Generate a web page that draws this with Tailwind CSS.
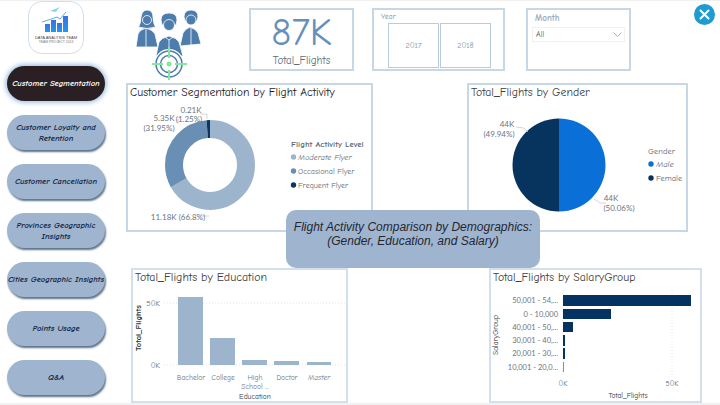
<!DOCTYPE html>
<html lang="en">

<head>
  <meta charset="UTF-8">
  <title>Customer Segmentation</title>
  <script src="https://cdn.jsdelivr.net/npm/@tailwindcss/browser@4"></script>
</head>

<body class="relative w-[720px] h-[405px] overflow-hidden bg-white border-t border-b-2 border-[#f0f0f0] font-['Comic_Sans_MS','Comic_Neue',cursive]">
  <div class="flex h-full">

    <!-- Sidebar -->
    <aside class="w-[126px] shrink-0 pl-[7px]">
      <div class="ml-[21px] w-[56px] h-[53px] rounded-[14px] border border-[#cfdfee] bg-white">
        <svg width="54" height="51" viewBox="29 2 54 51">
          <defs>
            <linearGradient id="logoBar" x1="0" y1="0" x2="0" y2="1">
              <stop offset="0" stop-color="#3f6fe0" />
              <stop offset="1" stop-color="#1d9bf0" />
            </linearGradient>
          </defs>
          <rect x="45" y="24" width="5" height="8" fill="url(#logoBar)" />
          <rect x="51" y="20" width="5" height="12" fill="url(#logoBar)" />
          <rect x="57" y="23" width="5" height="9" fill="url(#logoBar)" />
          <rect x="63" y="16" width="5" height="16" fill="url(#logoBar)" />
          <path d="M42 22Q52 19 57 17L60 19L66 12" fill="none" stroke="#5aa9ee" stroke-width="1" />
          <path d="M50 11L60 7L62 5L58 9L56 12Z" fill="#8fd0f5" />
          <text x="56" y="38.500" text-anchor="middle" font-size="4" font-family="Liberation Sans" fill="#444">DATA ANALYSIS TEAM</text>
          <text x="56" y="43" text-anchor="middle" font-size="3.400" font-family="Liberation Sans" fill="#777">TEAM PROJECT 2024</text>
        </svg>
      </div>

      <nav class="mt-[12px] flex flex-col gap-[14px] w-[98px] text-[8.5px] font-bold italic leading-[11px] text-center text-[#12233f]">
        <a class="h-[35px] flex items-center justify-center rounded-[18px] bg-[#2a2024] text-white shadow-[0_0_4px_2px_#a9c6e4]">Customer Segmentation</a>
        <a class="h-[35px] flex items-center justify-center px-2 rounded-[18px] bg-[#9fb5cf] shadow-[1px_2px_2px_#5d7389]">Customer Loyalty and Retention</a>
        <a class="h-[35px] flex items-center justify-center px-2 rounded-[18px] bg-[#9fb5cf] shadow-[1px_2px_2px_#5d7389]">Customer Cancellation</a>
        <a class="h-[35px] flex items-center justify-center px-2 rounded-[18px] bg-[#9fb5cf] shadow-[1px_2px_2px_#5d7389]">Provinces Geographic Insights</a>
        <a class="h-[35px] flex items-center justify-center rounded-[18px] bg-[#9fb5cf] shadow-[1px_2px_2px_#5d7389]">Cities Geographic Insights</a>
        <a class="h-[35px] flex items-center justify-center px-2 rounded-[18px] bg-[#9fb5cf] shadow-[1px_2px_2px_#5d7389]">Points Usage</a>
        <a class="h-[35px] flex items-center justify-center px-2 rounded-[18px] bg-[#9fb5cf] shadow-[1px_2px_2px_#5d7389]">Q&amp;A</a>
      </nav>
    </aside>

    <!-- Report page -->
    <main class="flex-1 flex flex-col">

      <!-- Header row -->
      <div class="h-[82px] pt-[7px] flex items-start">
        <svg class="ml-[9px] mt-[2px]" width="68" height="70" viewBox="135 10 68 70">
          <g fill="#4c7dad" stroke="#fff" stroke-width=".8">
            <!-- left woman -->
            <path d="M136 47L138 34Q139 30 146 28Q153 30 155 34L158 47Z" />
            <path d="M138.500 27Q141 23 141 17Q142 10 147 10Q153 10 153 17Q153 23 155.500 27Q147 30 138.500 27Z" />
            <circle cx="147" cy="20" r="4.500" />
            <!-- right man -->
            <path d="M180 46L183 33Q185 29 190 27Q196 29 198 33L201 44Z" />
            <path d="M184 17Q184 10 191 10Q198 10 198 17L197 21H185Z" />
            <circle cx="191" cy="20" r="5" />
            <!-- middle person -->
            <path d="M156 56L159 42Q161 38 169 36Q177 38 179 42L183 56Z" />
            <path d="M161 20Q161 13 169 13Q177 13 177 20L176 25H162Z" />
            <circle cx="169" cy="25" r="5.500" />
          </g>
          <path d="M146 29V47M191 28V45M165 37L169 40L173 37M169 40V52" fill="none" stroke="#fff" stroke-width=".8" />
          <circle cx="169" cy="64" r="15" fill="#fff" />
          <g fill="none" stroke="#4c7dad" stroke-width="1.500">
            <circle cx="169" cy="64" r="13" />
            <circle cx="169" cy="64" r="8.500" />
          </g>
          <path d="M169 47V58M169 70V80M152 64H163M175 64H187" stroke="#84e89c" stroke-width="2" />
          <circle cx="169" cy="64" r="2.500" fill="#84e89c" />
        </svg>

        <div class="ml-[46px] w-[105px] h-[63px] border-2 border-[#c8d7e6] flex flex-col items-center">
          <div class="mt-[2px] text-[39px] leading-[42px] text-[#6690bb]">87K</div>
          <div class="text-[11px] leading-[13px] text-[#5b6b7b]">Total_Flights</div>
        </div>

        <div class="ml-[18px] w-[133px] h-[63px] border-2 border-[#c8d7e6] pl-[14px] pt-[2px]">
          <div class="text-[7.5px] leading-[10px] -ml-[7px] text-[#7c8ea0]">Year</div>
          <div class="mt-[1px] flex gap-px text-[8px] text-[#7c93ad]">
            <div class="w-[51px] h-[45px] border border-[#b9cbdd] flex items-center justify-center">2017</div>
            <div class="w-[51px] h-[45px] border border-[#b9cbdd] flex items-center justify-center">2018</div>
          </div>
        </div>

        <div class="ml-[21px] w-[105px] h-[63px] border-2 border-[#c8d7e6] px-1">
          <div class="mt-[2px] ml-[3px] text-[9px] leading-[12px] font-bold text-[#9aaabb]">Month</div>
          <div class="mt-[3px] h-[15px] border border-[#f0f0f0] pl-[3px] pr-[2px] flex items-center justify-between text-[8px] text-[#555]">
            <span>All</span>
            <svg width="9" height="5" viewBox="0 0 9 5"><path d="M.5.5L4.500 4.500L8.500.5" fill="none" stroke="#8a8a8a" stroke-width=".7" /></svg>
          </div>
        </div>
      </div>

      <!-- Top charts -->
      <div class="flex h-[149px]">
        <section class="w-[247px] h-full border-2 border-[#c8d7e6] flex flex-col">
          <h2 class="h-[18px] pl-[2px] text-[11.7px] leading-[15px] text-[#1c1c1c]">Customer Segmentation by Flight Activity</h2>
          <svg width="243" height="127" viewBox="128 103 243 127" font-size="8" font-family="Lato" fill="#6b7580">
            <g fill="none" stroke-width="18" transform="rotate(-90 210 165)">
              <circle cx="210" cy="165" r="36" pathLength="100" stroke="#9db4cd" stroke-dasharray="66.8 100" />
              <circle cx="210" cy="165" r="36" pathLength="100" stroke="#6a8fb5" stroke-dasharray="31.95 100" stroke-dashoffset="-66.8" />
              <circle cx="210" cy="165" r="36" pathLength="100" stroke="#0b3563" stroke-dasharray="1.25 100" stroke-dashoffset="-98.75" />
            </g>
            <path d="M200 114H207V119M178 119V124M209 216H200" fill="none" stroke="#ccc" stroke-width=".8" />
            <text x="191" y="113" text-anchor="middle">0.21K</text>
            <text x="189" y="122" text-anchor="middle">(1.25%)</text>
            <text x="164" y="121" text-anchor="middle">5.35K</text>
            <text x="159" y="131" text-anchor="middle">(31.95%)</text>
            <text x="178" y="220" text-anchor="middle">11.18K (66.8%)</text>
            <g font-family="Comic Sans MS, Comic Neue, cursive" fill="#5f6a75">
              <text x="291" y="147" font-size="8.700" font-weight="700">Flight Activity Level</text>
              <text x="298" y="160" font-size="8.200" font-style="italic">Moderate Flyer</text>
              <text x="298" y="174" font-size="8">Occasional Flyer</text>
              <text x="298" y="188" font-size="8">Frequent Flyer</text>
            </g>
            <circle cx="293.500" cy="157" r="2.700" fill="#9db4cd" />
            <circle cx="293.500" cy="171" r="2.700" fill="#6a8fb5" />
            <circle cx="293.500" cy="185" r="2.700" fill="#0b3563" />
          </svg>
        </section>

        <section class="ml-[94px] w-[221px] h-full border-2 border-[#c8d7e6] flex flex-col">
          <h2 class="h-[18px] pl-[2px] text-[11.8px] leading-[15px] text-[#404040]">Total_Flights by Gender</h2>
          <svg width="217" height="127" viewBox="469 103 217 127" font-size="8" font-family="Lato" fill="#6b7580">
            <path d="M559 118.500A46.500 46.500 0 0 1 559 211.500Z" fill="#0a6fd6" />
            <path d="M559 118.500A46.500 46.500 0 0 0 559 211.500Z" fill="#07335f" />
            <path d="M516 127L524 128L528 132M594 199L600 203H606" fill="none" stroke="#ccc" stroke-width=".8" />
            <text x="507" y="127" text-anchor="middle">44K</text>
            <text x="499" y="137" text-anchor="middle">(49.94%)</text>
            <text x="611" y="201" text-anchor="middle">44K</text>
            <text x="619" y="211" text-anchor="middle">(50.06%)</text>
            <g font-family="Comic Sans MS, Comic Neue, cursive" fill="#5f6a75" font-size="8.500">
              <text x="648" y="154">Gender</text>
              <text x="656" y="167" font-style="italic">Male</text>
              <text x="656" y="181">Female</text>
            </g>
            <circle cx="651" cy="164" r="2.700" fill="#0a6fd6" />
            <circle cx="651" cy="178" r="2.700" fill="#07335f" />
          </svg>
        </section>
      </div>

      <!-- Bottom charts -->
      <div class="mt-[36px] flex h-[135px]">
        <section class="ml-[5px] w-[217px] h-full border-2 border-[#d3e0ec] flex flex-col">
          <h2 class="h-[18px] pl-[2px] text-[11.9px] leading-[15px] text-[#404040]">Total_Flights by Education</h2>
          <svg width="213" height="113" viewBox="133 288 213 113" font-size="7.500" fill="#6b7580">
            <path d="M164 303H345M164 365H345" stroke="#ddd" stroke-width=".8" stroke-dasharray="1 2" />
            <g fill="#9db4cd">
              <rect x="178" y="297" width="25" height="68" />
              <rect x="210" y="338" width="25" height="27" />
              <rect x="242" y="360" width="25" height="5" />
              <rect x="274" y="361" width="25" height="4" />
              <rect x="307" y="362" width="24" height="3" />
            </g>
            <text x="160" y="306" text-anchor="end" font-size="8">50K</text>
            <text x="160" y="368" text-anchor="end" font-size="8">0K</text>
            <text x="191" y="380" text-anchor="middle">Bachelor</text>
            <text x="223" y="380" text-anchor="middle">College</text>
            <text x="255" y="380" text-anchor="middle">High</text>
            <text x="255" y="389" text-anchor="middle">School ...</text>
            <text x="287" y="380" text-anchor="middle">Doctor</text>
            <text x="319" y="380" text-anchor="middle" font-style="italic">Master</text>
            <text x="255" y="399" text-anchor="middle" fill="#333">Education</text>
            <text transform="translate(141 328) rotate(-90)" text-anchor="middle" font-size="8.500" font-weight="700" fill="#333">Total_Flights</text>
          </svg>
        </section>

        <section class="ml-[141px] w-[213px] h-full border-2 border-[#d3e0ec] flex flex-col">
          <h2 class="h-[18px] pl-[2px] text-[11.7px] leading-[15px] text-[#404040]">Total_Flights by SalaryGroup</h2>
          <svg width="209" height="113" viewBox="491 288 209 113" font-size="7.500" fill="#6b7580">
            <path d="M563 290V376M672 290V376" stroke="#ddd" stroke-width=".8" stroke-dasharray="1 2" />
            <g fill="#053361">
              <rect x="563" y="295" width="128" height="11" />
              <rect x="563" y="309" width="48" height="10" />
              <rect x="563" y="322" width="10" height="10" />
              <rect x="563" y="335" width="2" height="11" />
              <rect x="563" y="348" width="2" height="11" />
              <rect x="563" y="362" width="1" height="10" fill="#7d93ab" />
            </g>
            <g text-anchor="end" font-family="Lato">
              <text x="558" y="303">50,001 - 54,...</text>
              <text x="558" y="317">0 - 10,000</text>
              <text x="558" y="330">40,001 - 50,...</text>
              <text x="558" y="343">30,001 - 40,...</text>
              <text x="558" y="356">20,001 - 30,...</text>
              <text x="558" y="370">10,001 - 20,0...</text>
            </g>
            <text x="563" y="386" text-anchor="middle">0K</text>
            <text x="672" y="386" text-anchor="middle">50K</text>
            <text x="628" y="398" text-anchor="middle" fill="#333">Total_Flights</text>
            <text transform="translate(498 335) rotate(-90)" text-anchor="middle" fill="#333">SalaryGroup</text>
          </svg>
        </section>
      </div>
    </main>
  </div>

  <!-- Banner over the charts -->
  <div class="absolute left-[286px] top-[209px] w-[254px] h-[58px] pb-[10px] rounded-[10px] bg-[#9fb5cf] flex flex-col items-center justify-center font-['Liberation_Sans',sans-serif] italic text-[12px] leading-[14px] text-[#1f2733]">
    <div>Flight Activity Comparison by Demographics:</div>
    <div>(Gender, Education, and Salary)</div>
  </div>

  <!-- Close button -->
  <button class="absolute left-[694px] top-[3px] w-[21px] h-[21px] rounded-full bg-[#1f9bd1] flex items-center justify-center">
    <svg width="11" height="11" viewBox="0 0 11 11"><path d="M1.500 1.500L9.500 9.500M9.500 1.500L1.500 9.500" stroke="#fff" stroke-width="2" stroke-linecap="round" /></svg>
  </button>
</body>

</html>
